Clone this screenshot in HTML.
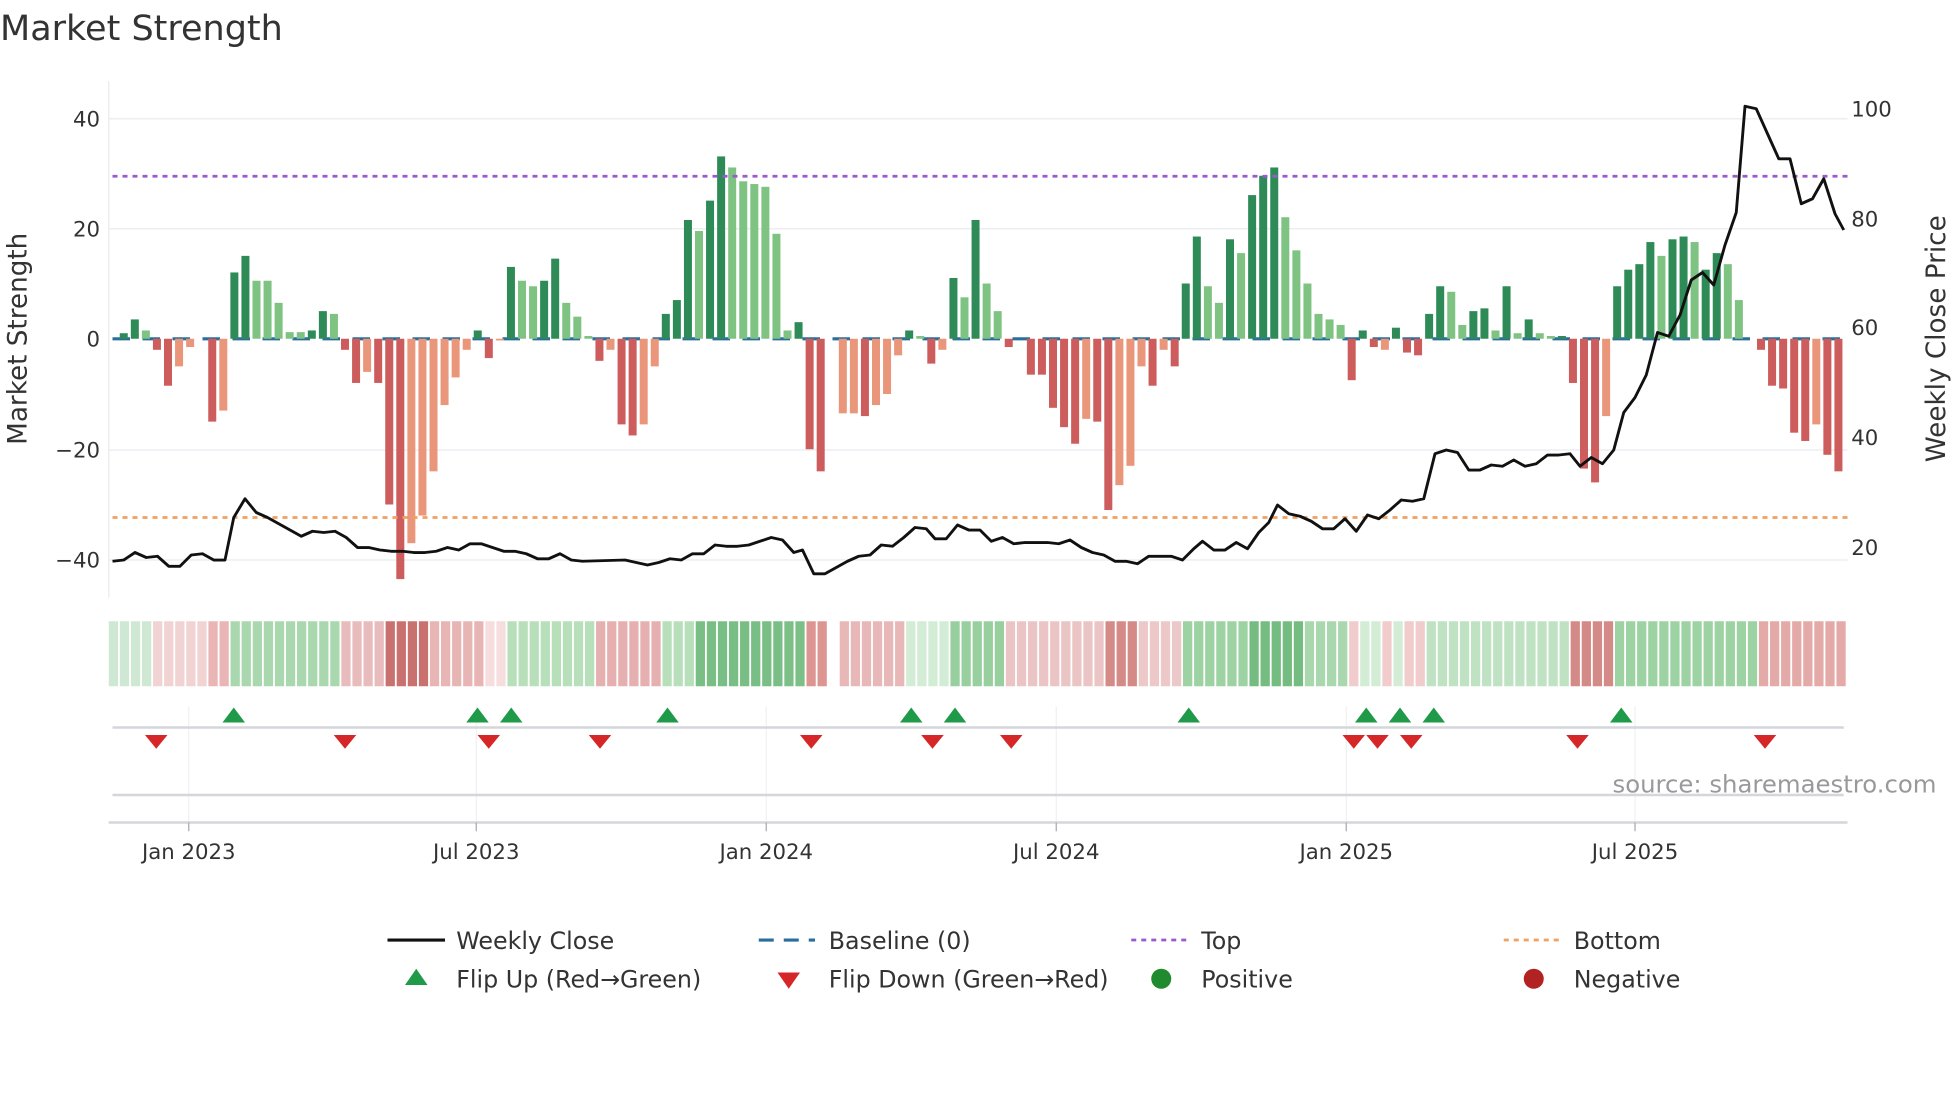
<!DOCTYPE html>
<html><head><meta charset="utf-8"><style>
html,body{margin:0;padding:0;background:#fff;}
svg{display:block;}
text{font-family:"DejaVu Sans","Liberation Sans",sans-serif;fill:#333;}
</style></head><body>
<svg id="s" width="1960" height="1102" viewBox="0 0 1568 881.6" xmlns="http://www.w3.org/2000/svg">
<text x="0" y="32" font-size="28">Market Strength</text>
<g stroke="#eceef2" stroke-width="1.2">
<line x1="87" x2="1478" y1="95" y2="95"/><line x1="87" x2="1478" y1="183" y2="183"/>
<line x1="87" x2="1478" y1="360" y2="360"/><line x1="87" x2="1478" y1="448" y2="448"/>
<line x1="87" x2="87" y1="65" y2="478"/>
</g>
<g font-size="17" text-anchor="end">
<text x="80" y="101">40</text><text x="80" y="189">20</text><text x="80" y="277">0</text>
<text x="80" y="366">−20</text><text x="80" y="454">−40</text>
</g>
<g font-size="17">
<text x="1481" y="93">100</text><text x="1481" y="181">80</text><text x="1481" y="268">60</text>
<text x="1481" y="356">40</text><text x="1481" y="444">20</text>
</g>
<text font-size="21" text-anchor="middle" transform="translate(21,271) rotate(-90)">Market Strength</text>
<text font-size="21" text-anchor="middle" transform="translate(1556,271) rotate(-90)">Weekly Close Price</text>
<line x1="90" x2="1478" y1="271" y2="271" stroke="#2a6f9c" stroke-width="2.5" stroke-dasharray="14 10"/>
<g id="bars"></g>
<line x1="90" x2="1478" y1="141" y2="141" stroke="#9b59d0" stroke-width="2.2" stroke-dasharray="4 4"/>
<line x1="90" x2="1478" y1="414" y2="414" stroke="#f0a060" stroke-width="2.2" stroke-dasharray="4 4"/>
<polyline id="pl" fill="none" stroke="#111" stroke-width="2.3" stroke-linejoin="round"/>
<g id="heat"></g>
<g stroke="#eef1f4" stroke-width="1">
<line x1="151" x2="151" y1="565" y2="660"/><line x1="381" x2="381" y1="565" y2="660"/>
<line x1="613" x2="613" y1="565" y2="660"/><line x1="845" x2="845" y1="565" y2="660"/>
<line x1="1077" x2="1077" y1="565" y2="660"/><line x1="1308" x2="1308" y1="565" y2="660"/>
</g>
<line x1="90" x2="1475" y1="582" y2="582" stroke="#d4d6da" stroke-width="2"/>
<line x1="90" x2="1475" y1="636" y2="636" stroke="#d4d6da" stroke-width="2"/>
<line x1="87" x2="1478" y1="658" y2="658" stroke="#d4d6da" stroke-width="2"/>
<g stroke="#aaa" stroke-width="1">
<line x1="151" x2="151" y1="658" y2="665"/><line x1="381" x2="381" y1="658" y2="665"/>
<line x1="613" x2="613" y1="658" y2="665"/><line x1="845" x2="845" y1="658" y2="665"/>
<line x1="1077" x2="1077" y1="658" y2="665"/><line x1="1308" x2="1308" y1="658" y2="665"/>
</g>
<g id="mk"></g>
<text x="1290" y="634" font-size="19.5" style="fill:#999">source: sharemaestro.com</text>
<g font-size="17" text-anchor="middle">
<text x="151" y="687">Jan 2023</text><text x="381" y="687">Jul 2023</text><text x="613" y="687">Jan 2024</text>
<text x="845" y="687">Jul 2024</text><text x="1077" y="687">Jan 2025</text><text x="1308" y="687">Jul 2025</text>
</g>
<g font-size="19">
<line x1="310" x2="356" y1="752" y2="752" stroke="#111" stroke-width="2.5"/>
<text x="365" y="759">Weekly Close</text>
<line x1="607" x2="652" y1="752" y2="752" stroke="#2a6f9c" stroke-width="2.5" stroke-dasharray="12 8"/>
<text x="663" y="759">Baseline (0)</text>
<line x1="905" x2="950" y1="752" y2="752" stroke="#9b59d0" stroke-width="2.2" stroke-dasharray="4 4"/>
<text x="961" y="759">Top</text>
<line x1="1203" x2="1248" y1="752" y2="752" stroke="#f0a060" stroke-width="2.2" stroke-dasharray="4 4"/>
<text x="1259" y="759">Bottom</text>
<polygon points="324,788 342,788 333,775" fill="#1f9a48"/>
<text x="365" y="790">Flip Up (Red→Green)</text>
<polygon points="622,778 640,778 631,791" fill="#d62728"/>
<text x="663" y="790">Flip Down (Green→Red)</text>
<circle cx="929" cy="783" r="8" fill="#1f8a2e"/>
<text x="961" y="790">Positive</text>
<circle cx="1227" cy="783" r="8" fill="#b22222"/>
<text x="1259" y="790">Negative</text>
</g>
</svg>
<script>
var NS="http://www.w3.org/2000/svg";
function el(p,t,a){var e=document.createElementNS(NS,t);for(var k in a)e.setAttribute(k,a[k]);p.appendChild(e);return e;}
var B="1d 3.5d 1.5l -2r -8.5r -5s -1.5s 0s -15r -13s 12d 15d 10.5l 10.5l 6.5l 1.2l 1.2l 1.5d 5d 4.5l -2r -8r -6s -8r -30r -43.5r -37s -32s -24s -12s -7s -2s 1.5d -3.5r -0.3s 13d 10.5l 9.5l 10.5d 14.5d 6.5l 4l 0.5l -4r -2s -15.5r -17.5r -15.5s -5s 4.5d 7d 21.5d 19.5l 25d 33d 31l 28.5l 28l 27.5l 19l 1.5l 3d -20r -24r 0s -13.5s -13.5s -14r -12s -10s -3s 1.5d 0.5l -4.5r -2s 11d 7.5l 21.5d 10l 5l -1.5r 0s -6.5r -6.5r -12.5r -16r -19r -14.5s -15r -31r -26.5s -23s -5s -8.5r -2s -5r 10d 18.5d 9.5l 6.5l 18d 15.5l 26d 29.5d 31d 22l 16l 10l 4.5l 3.5l 2.5l -7.5r 1.5d -1.5r -2s 2d -2.5r -3r 4.5d 9.5d 8.5l 2.5l 5d 5.5d 1.5l 9.5d 1l 3.5d 1l 0.5l 0.5d -8r -23.5r -26r -14s 9.5d 12.5d 13.5d 17.5d 15l 18d 18.5d 17.5l 12.5d 15.5d 13.5l 7l 0s -2r -8.5r -9r -17r -18.5r -15.5s -21r -24r".split(" ");
var C={d:"#2e8b57",l:"#7fc383",r:"#cd5c5c",s:"#e9967a"};
var g=document.getElementById("bars");
B.forEach(function(b,i){var v=parseFloat(b),t=b.slice(-1),x=99+i*8.85,h=Math.abs(v)*4.42;
 if(h<0.3)return;el(g,"rect",{x:x-3.2,y:v>0?271-h:271,width:6.4,height:h,fill:C[t]});});
var P=[[90,449],[99,448],[108,442],[117,446],[126,445],[135,453],[144,453],[153,444],[162,443],[171,448],[180,448],[187,414],[196,399],[205,410],[214,414],[223,419],[232,424],[241,429],[250,425],[259,426],[268,425],[277,430],[286,438],[295,438],[304,440],[313,441],[322,441],[331,442],[340,442],[349,441],[358,438],[367,440],[376,435],[385,435],[394,438],[403,441],[412,441],[421,443],[430,447],[439,447],[448,443],[457,448],[466,449],[500,448],[509,450],[518,452],[527,450],[536,447],[545,448],[554,443],[563,443],[572,436],[581,437],[590,437],[599,436],[608,433],[617,430],[626,432],[635,442],[642,440],[651,459],[660,459],[669,454],[678,449],[687,445],[696,444],[705,436],[714,437],[723,430],[732,422],[741,423],[748,431],[757,431],[766,420],[775,424],[784,424],[793,433],[802,430],[811,435],[820,434],[829,434],[838,434],[847,435],[856,432],[865,438],[874,442],[883,444],[892,449],[901,449],[910,451],[919,445],[928,445],[937,445],[946,448],[955,439],[962,433],[971,440],[980,440],[989,434],[998,439],[1007,426],[1015,418],[1022,404],[1031,411],[1040,413],[1049,417],[1058,423],[1067,423],[1076,415],[1085,425],[1094,412],[1103,415],[1112,408],[1121,400],[1130,401],[1139,399],[1148,363],[1157,360],[1166,362],[1175,376],[1184,376],[1193,372],[1202,373],[1211,368],[1220,373],[1229,371],[1238,364],[1247,364],[1256,363],[1264,373],[1273,366],[1282,371],[1291,360],[1299,330],[1308,318],[1317,300],[1326,266],[1335,269],[1344,252],[1353,224],[1362,218],[1371,228],[1380,196],[1389,170],[1396,85],[1405,87],[1414,107],[1423,127],[1432,127],[1441,163],[1450,159],[1459,143],[1468,171],[1475,184]];
document.getElementById("pl").setAttribute("points",P.map(function(p){return p.join(",")}).join(" "));
var R=[[87,"#cfe8d3"],[120,"#f2d3d3"],[165,"#e9b5b5"],[183,"#a9d8ae"],[270,"#e8bcbc"],[310,"#c9716e"],[345,"#e8b5b5"],[385,"#f6dede"],[405,"#b6dfba"],[475,"#e6b0b0"],[530,"#b6dfba"],[550,"#79bf85"],[627,"#7cc088"],[645,"#dc9590"],[662,null],[672,"#e8b8b8"],[725,"#d3ecd6"],[760,"#98cf9f"],[805,"#ebc5c5"],[885,"#d48a86"],[910,"#edc8c8"],[947,"#9dd2a3"],[1000,"#74bc80"],[1040,"#a9d8ae"],[1080,"#f0cccc"],[1090,"#d3ecd6"],[1100,"#f0cccc"],[1115,"#d3ecd6"],[1125,"#f0cccc"],[1140,"#bfe2c3"],[1258,"#d48a86"],[1293,"#9dd2a3"],[1408,"#e3aaa8"]];
var h=document.getElementById("heat");
for(var x=87;x<1478;x+=8.86){var c=null;for(var j=0;j<R.length;j++)if(x+2>=R[j][0])c=R[j][1];
 if(c)el(h,"rect",{x:x,y:497,width:7.4,height:52,fill:c});}
var m=document.getElementById("mk");
[187,382,409,534,729,764,951,1093,1120,1147,1297].forEach(function(x){el(m,"polygon",{points:(x-9)+",578 "+(x+9)+",578 "+x+",566",fill:"#1f9a48"});});
[125,276,391,480,649,746,809,1083,1102,1129,1262,1412].forEach(function(x){el(m,"polygon",{points:(x-9)+",588 "+(x+9)+",588 "+x+",599",fill:"#d62728"});});
</script>
</body></html>
